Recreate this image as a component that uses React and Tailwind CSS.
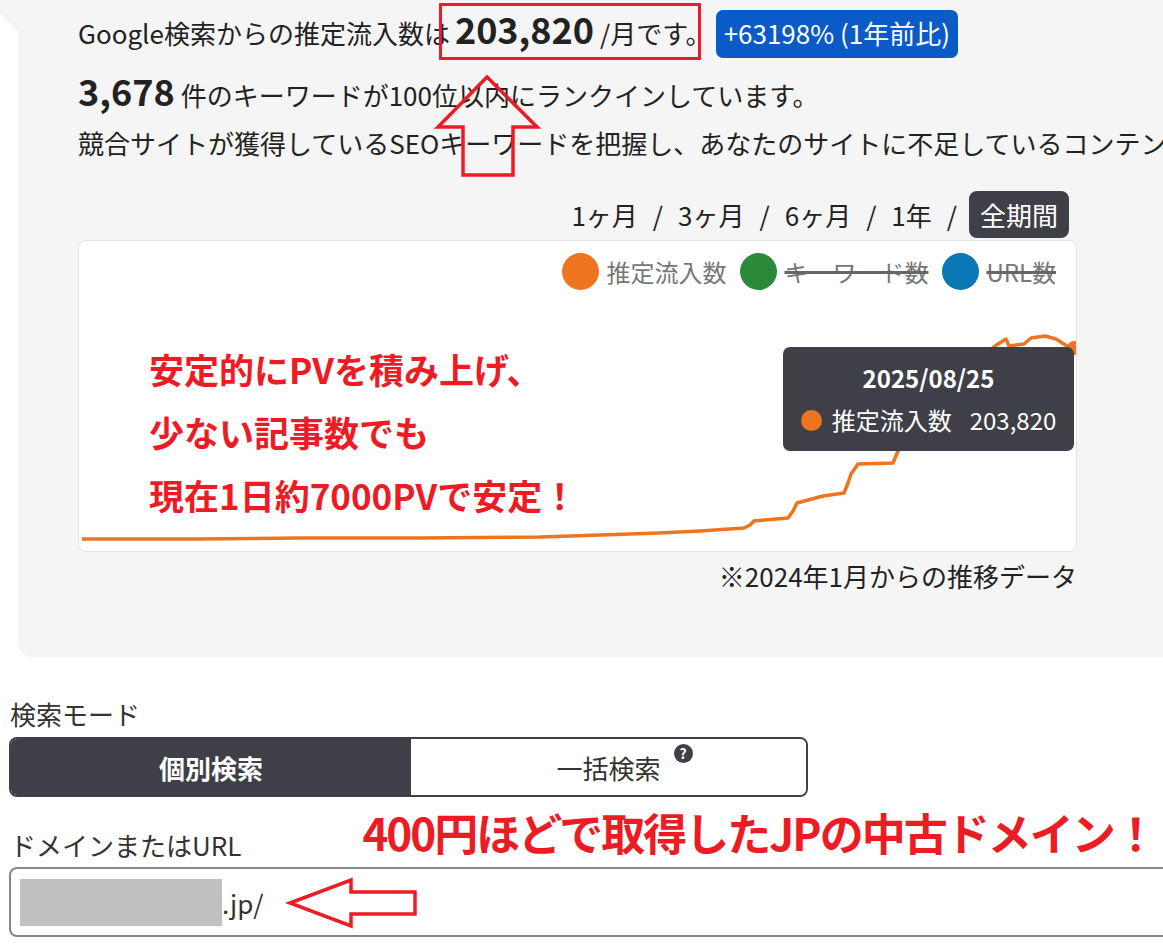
const linePoints = [
  [3, 298], [120, 298], [221, 297], [340, 297], [461, 296], [521, 294], [580, 292], [621, 290],
  [665, 287], [671, 284], [675, 280], [709, 277], [714, 270], [718, 262], [744, 255],
  [765, 252], [769, 242], [772, 233], [779, 223], [814, 222], [819, 210], [830, 190],
  [860, 160], [890, 130], [916, 105], [927, 98], [930, 105], [945, 103], [952, 97],
  [966, 95], [977, 98], [988, 105], [996, 108],
]
  .map(([x, y]) => `${x},${y}`)
  .join(' ');

function Legend({ color, label, off }) {
  return (
    <div className="flex items-center gap-[7px]">
      <span className="h-[37px] w-[37px] rounded-full" style={{ backgroundColor: color }} />
      <span className={off ? 'text-[#777] line-through decoration-[#666] decoration-[3px]' : 'text-[#777]'}>{label}</span>
    </div>
  );
}

export default function App() {
  return (
    <div className="relative h-[946px] w-[1163px] overflow-hidden bg-white text-[#222] font-['Noto_Sans_CJK_JP','Noto_Sans',sans-serif]">
      <svg className="absolute left-0 top-0" width="18" height="32">
        <polygon points="0,0 18,0 18,32 0,14" fill="#f5f5f5" />
      </svg>

      <section className="ml-[18px] h-[657px] w-[1200px] rounded-bl-[14px] bg-[#f5f5f5] pl-[60px] pt-[3px]">
        <div className="w-[999px]">
          <div className="flex items-baseline text-[26px]">
            <span>Google検索からの推定流入数は</span>
            <span className="-ml-[11px] flex items-baseline border-[3px] border-[#ed1c24] pl-[13px] pr-0 pt-[1px] pb-[3px] leading-[43px]">
              <b className="text-[36px] font-bold">203,820</b>
              <span className="ml-[6px] -mr-[14px]">/月です。</span>
            </span>
            <span className="ml-[15px] rounded-[7px] bg-[#0a5ac8] px-[8px] pb-[7px] pt-[4px] leading-[37px] text-white">
              +63198% (1年前比)
            </span>
          </div>

          <div className="mt-[11px] flex items-baseline text-[26px] leading-[38px]">
            <b className="text-[36px] font-bold">3,678</b>
            <span className="ml-[6px]">件のキーワードが100位以内にランクインしています。</span>
          </div>
          <p className="mt-[9px] w-[1090px] overflow-hidden whitespace-nowrap text-[26px] leading-[40px]">
            競合サイトが獲得しているSEOキーワードを把握し、あなたのサイトに不足しているコンテン
          </p>

          <div className="mt-[28px] flex items-center justify-end gap-[15px] pr-[8px] text-[26px]">
            <span>1ヶ月</span>
            <span>/</span>
            <span>3ヶ月</span>
            <span>/</span>
            <span>6ヶ月</span>
            <span>/</span>
            <span>1年</span>
            <span className="-mr-[3px]">/</span>
            <span className="rounded-[8px] bg-[#3f4047] px-[11px] leading-[47px] text-white">全期間</span>
          </div>

          <div className="relative mt-[2px] h-[312px] overflow-hidden rounded-[8px] border border-[#e3e3e3] bg-white">
            <div className="flex justify-end gap-[14px] pr-[20px] pt-[12px] text-[24px] leading-[37px]">
              <Legend color="#ee7420" label="推定流入数" />
              <Legend color="#2a8a3a" label="キーワード数" off />
              <Legend color="#0a77b5" label="URL数" off />
            </div>

            <svg className="absolute left-0 top-0" width="998" height="312">
              <polyline points={linePoints} fill="none" stroke="#ee7420" strokeWidth="3.5" strokeLinejoin="round" />
              <circle cx="995" cy="107" r="7" fill="#ee7420" />
            </svg>

            <div className="absolute left-[70px] top-[96px] text-[35px] font-bold leading-[63px] text-[#ed1c24]">
              <p>安定的にPVを積み上げ、</p>
              <p>少ない記事数でも</p>
              <p>現在1日約7000PVで安定！</p>
            </div>

            <div className="absolute left-[704px] top-[106px] flex h-[104px] w-[291px] flex-col items-center rounded-[7px] bg-[#3f4047] pt-[14px] text-[24px] text-white">
              <p className="font-bold leading-[34px]">2025/08/25</p>
              <div className="mt-[8px] flex items-center leading-[34px]">
                <span className="mr-[10px] h-[21px] w-[21px] rounded-full bg-[#ee7420]" />
                <span>推定流入数</span>
                <span className="ml-[18px]">203,820</span>
              </div>
            </div>
          </div>

          <p className="mt-[9px] text-right text-[26px] leading-[30px]">※2024年1月からの推移データ</p>
        </div>
      </section>

      <p className="ml-[10px] mt-[44px] text-[26px] leading-[26px] text-[#333]">検索モード</p>
      <div className="ml-[9px] mt-[10px] flex h-[60px] w-[799px] overflow-hidden rounded-[8px] border-2 border-[#3f4047] text-[26px]">
        <div className="flex w-[400px] items-center justify-center bg-[#3f4047] font-bold text-white">個別検索</div>
        <div className="flex flex-1 items-center justify-center bg-white text-[#333]">
          <span className="relative">
            一括検索
            <span className="absolute -right-[32px] top-[-4px] flex h-[19px] w-[19px] items-center justify-center rounded-full bg-[#3f4047] text-[14px] font-bold leading-none text-white">?</span>
          </span>
        </div>
      </div>

      <div className="flex h-[70px] items-end">
        <span className="mb-[7px] ml-[10px] text-[26px] leading-[30px] text-[#333]">ドメインまたはURL</span>
        <span className="mb-[11px] ml-[121px] text-[44px] font-bold leading-[48px] tracking-[-2px] text-[#ed1c24]">
          400円ほどで取得したJPの中古ドメイン！
        </span>
      </div>
      <div className="ml-[9px] flex h-[70px] w-[1200px] items-center rounded-[8px] border-2 border-[#86868e] bg-white pl-[9px]">
        <span className="h-[47px] w-[202px] bg-[#c0c0c0]" />
        <span className="text-[26px] text-[#333]">.jp/</span>
      </div>

      {/* annotation arrows */}
      <svg className="pointer-events-none absolute left-0 top-0" width="1163" height="946">
        <polygon points="487,77 537,127 513,127 513,175 463,175 463,127 438,127" fill="none" stroke="#ed1c24" strokeWidth="3.5" strokeLinejoin="miter" />
        <polygon points="290,903 351,880 351,892 415,892 415,914 351,914 351,926" fill="none" stroke="#ed1c24" strokeWidth="3.5" strokeLinejoin="miter" />
      </svg>
    </div>
  );
}
